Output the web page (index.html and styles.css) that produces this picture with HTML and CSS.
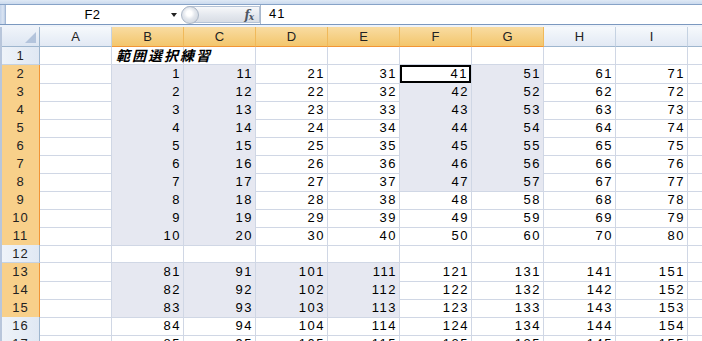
FILE: index.html
```html
<!DOCTYPE html>
<html lang="ja">
<head>
<meta charset="utf-8">
<title>範囲選択練習</title>
<link rel="stylesheet" href="styles.css">
</head>
<body>
<div class="app">
  <div class="ribbon"></div>
  <div class="fbar">
    <div class="frame"></div>
    <div class="namebox"><span class="ref">F2</span><span class="arrow"></span></div>
    <div class="fxbtn"><span class="knob"></span><span class="fx">f<sub>x</sub></span></div>
    <div class="formula">41</div>
  </div>
  <div class="gap"></div>
  <div class="sheet">
    <div class="row head">
      <div class="corner"><span class="tri"></span></div>
      <div class="ch">A</div><div class="ch hl">B</div><div class="ch hl">C</div><div class="ch hl">D</div><div class="ch hl">E</div><div class="ch hl">F</div><div class="ch hl">G</div><div class="ch">H</div><div class="ch">I</div><div class="ch">J</div>
    </div>
    <div class="row">
      <div class="rh">1</div><div class="c"></div><div class="c title">範囲選択練習</div><div class="c"></div><div class="c"></div><div class="c"></div><div class="c"></div><div class="c"></div><div class="c"></div><div class="c"></div><div class="c"></div>
    </div>
    <div class="row">
      <div class="rh hl">2</div><div class="c"></div><div class="c s">1</div><div class="c s">11</div><div class="c">21</div><div class="c">31</div><div class="c act">41</div><div class="c s">51</div><div class="c">61</div><div class="c">71</div><div class="c"></div>
    </div>
    <div class="row">
      <div class="rh hl">3</div><div class="c"></div><div class="c s">2</div><div class="c s">12</div><div class="c">22</div><div class="c">32</div><div class="c s">42</div><div class="c s">52</div><div class="c">62</div><div class="c">72</div><div class="c"></div>
    </div>
    <div class="row">
      <div class="rh hl">4</div><div class="c"></div><div class="c s">3</div><div class="c s">13</div><div class="c">23</div><div class="c">33</div><div class="c s">43</div><div class="c s">53</div><div class="c">63</div><div class="c">73</div><div class="c"></div>
    </div>
    <div class="row">
      <div class="rh hl">5</div><div class="c"></div><div class="c s">4</div><div class="c s">14</div><div class="c">24</div><div class="c">34</div><div class="c s">44</div><div class="c s">54</div><div class="c">64</div><div class="c">74</div><div class="c"></div>
    </div>
    <div class="row">
      <div class="rh hl">6</div><div class="c"></div><div class="c s">5</div><div class="c s">15</div><div class="c">25</div><div class="c">35</div><div class="c s">45</div><div class="c s">55</div><div class="c">65</div><div class="c">75</div><div class="c"></div>
    </div>
    <div class="row">
      <div class="rh hl">7</div><div class="c"></div><div class="c s">6</div><div class="c s">16</div><div class="c">26</div><div class="c">36</div><div class="c s">46</div><div class="c s">56</div><div class="c">66</div><div class="c">76</div><div class="c"></div>
    </div>
    <div class="row">
      <div class="rh hl">8</div><div class="c"></div><div class="c s">7</div><div class="c s">17</div><div class="c">27</div><div class="c">37</div><div class="c s">47</div><div class="c s">57</div><div class="c">67</div><div class="c">77</div><div class="c"></div>
    </div>
    <div class="row">
      <div class="rh hl">9</div><div class="c"></div><div class="c s">8</div><div class="c s">18</div><div class="c">28</div><div class="c">38</div><div class="c">48</div><div class="c">58</div><div class="c">68</div><div class="c">78</div><div class="c"></div>
    </div>
    <div class="row">
      <div class="rh hl">10</div><div class="c"></div><div class="c s">9</div><div class="c s">19</div><div class="c">29</div><div class="c">39</div><div class="c">49</div><div class="c">59</div><div class="c">69</div><div class="c">79</div><div class="c"></div>
    </div>
    <div class="row">
      <div class="rh hl">11</div><div class="c"></div><div class="c s">10</div><div class="c s">20</div><div class="c">30</div><div class="c">40</div><div class="c">50</div><div class="c">60</div><div class="c">70</div><div class="c">80</div><div class="c"></div>
    </div>
    <div class="row">
      <div class="rh">12</div><div class="c"></div><div class="c"></div><div class="c"></div><div class="c"></div><div class="c"></div><div class="c"></div><div class="c"></div><div class="c"></div><div class="c"></div><div class="c"></div>
    </div>
    <div class="row">
      <div class="rh hl">13</div><div class="c"></div><div class="c s">81</div><div class="c s">91</div><div class="c s">101</div><div class="c s">111</div><div class="c">121</div><div class="c">131</div><div class="c">141</div><div class="c">151</div><div class="c"></div>
    </div>
    <div class="row">
      <div class="rh hl">14</div><div class="c"></div><div class="c s">82</div><div class="c s">92</div><div class="c s">102</div><div class="c s">112</div><div class="c">122</div><div class="c">132</div><div class="c">142</div><div class="c">152</div><div class="c"></div>
    </div>
    <div class="row">
      <div class="rh hl">15</div><div class="c"></div><div class="c s">83</div><div class="c s">93</div><div class="c s">103</div><div class="c s">113</div><div class="c">123</div><div class="c">133</div><div class="c">143</div><div class="c">153</div><div class="c"></div>
    </div>
    <div class="row">
      <div class="rh">16</div><div class="c"></div><div class="c">84</div><div class="c">94</div><div class="c">104</div><div class="c">114</div><div class="c">124</div><div class="c">134</div><div class="c">144</div><div class="c">154</div><div class="c"></div>
    </div>
    <div class="row">
      <div class="rh">17</div><div class="c"></div><div class="c">85</div><div class="c">95</div><div class="c">105</div><div class="c">115</div><div class="c">125</div><div class="c">135</div><div class="c">145</div><div class="c">155</div><div class="c"></div>
    </div>
  </div>
</div>
</body>
</html>
```
FILE: styles.css
```css
* { box-sizing: border-box; }
html, body { margin: 0; padding: 0; }
body {
  width: 702px;
  height: 341px;
  overflow: hidden;
  background: #ffffff;
  font-family: "Liberation Sans", "Noto Sans CJK JP", sans-serif;
  color: #000;
}
.app { width: 702px; height: 341px; overflow: hidden; }

.ribbon {
  height: 5px;
  background: linear-gradient(#dfe9f5, #cbdaee);
  border-bottom: 1px solid #87a3c7;
}

.fbar {
  display: flex;
  height: 20px;
  background: #ffffff;
  border-bottom: 1px solid #7b98bf;
}
.frame {
  width: 6px;
  background: linear-gradient(90deg, #c3d3ea, #dbe5f3 60%, #b9cbe3);
  border-right: 1px solid #a5b9d6;
}
.namebox {
  width: 176px;
  display: flex;
  align-items: center;
  font-size: 13px;
}
.namebox .ref { flex: 1; text-align: center; padding-left: 8px; letter-spacing: 0.5px; }
.namebox .arrow {
  width: 0; height: 0;
  margin-right: 5px;
  border-left: 3px solid transparent;
  border-right: 3px solid transparent;
  border-top: 4px solid #222;
}
.fxbtn {
  width: 78px;
  margin: 1px 0;
  display: flex;
  align-items: center;
  justify-content: space-between;
  border: 1px solid #b5c3d6;
  border-left: none;
  border-radius: 9px 0 0 9px;
  background: linear-gradient(#f7f8fa, #e4e8ee 55%, #d8dde5);
}
.fxbtn .knob {
  width: 18px; height: 18px;
  margin-left: -1px;
  border-radius: 50%;
  border: 1px solid #aab6c6;
  background: radial-gradient(circle at 45% 40%, #ffffff 0 20%, #e3e7ed 45%, #c6cdd7 100%);
}
.fxbtn .fx {
  font-family: "DejaVu Serif", "Liberation Serif", serif;
  font-style: italic;
  font-weight: bold;
  font-size: 12px;
  color: #4d5663;
  padding-right: 6px;
  letter-spacing: -1px;
}
.fxbtn .fx sub { font-size: 9px; vertical-align: -1px; }
.formula {
  flex: 1;
  border-left: 1px solid #a9b8cc;
  padding-left: 8px;
  font-size: 13px;
  line-height: 18px;
  letter-spacing: 1px;
}
.gap { height: 2px; background: #eef3fa; }

.sheet {
  padding-left: 2px;
  background: linear-gradient(90deg, #b8c6db 0 2px, #fff 2px);
}
.row {
  display: grid;
  grid-template-columns: 38px repeat(10, 72px);
  height: 18px;
}
.row.head { height: 20px; }

.corner {
  background: linear-gradient(#f0f4fa, #dde6f2);
  border-right: 1px solid #9eb6ce;
  border-bottom: 1px solid #9eb6ce;
  position: relative;
}
.corner .tri {
  position: absolute;
  right: 3px; bottom: 3px;
  width: 0; height: 0;
  border-left: 11px solid transparent;
  border-bottom: 11px solid #b3c4dc;
}
.ch {
  background: linear-gradient(#f6f9fc, #e2e9f4);
  border-right: 1px solid #c5d2e2;
  border-bottom: 1px solid #9eb6ce;
  text-align: center;
  font-size: 13px;
  line-height: 19px;
  color: #222;
}
.ch.hl {
  background: linear-gradient(#f9dca2, #f3c66c);
  border-right-color: #f0b95a;
  border-bottom: 1px solid #f29536;
}
.rh {
  background: linear-gradient(90deg, #eef3f9, #e0e8f3);
  border-right: 1px solid #9eb6ce;
  border-bottom: 1px solid #c5d2e2;
  text-align: center;
  font-size: 13px;
  line-height: 17px;
  letter-spacing: 1px;
  color: #222;
}
.rh.hl {
  background: #f8d08a;
  border-right-color: #f29536;
  border-bottom-color: #f0b75a;
}
.c {
  border-right: 1px solid #d0d7e5;
  border-bottom: 1px solid #d0d7e5;
  text-align: right;
  padding-right: 2px;
  font-size: 13px;
  line-height: 18px;
  letter-spacing: 1.5px;
  white-space: nowrap;
}
.c.s { background: #e6e8f1; }
.c.act { box-shadow: inset 0 0 0 2px #000; padding-right: 3px; }
.c.title {
  text-align: left;
  padding-left: 4px;
  overflow: visible;
  font-family: "Noto Sans CJK JP", sans-serif;
  font-weight: bold;
  font-style: italic;
  font-size: 14px;
  letter-spacing: 2px;
  line-height: 17px;
}
```
